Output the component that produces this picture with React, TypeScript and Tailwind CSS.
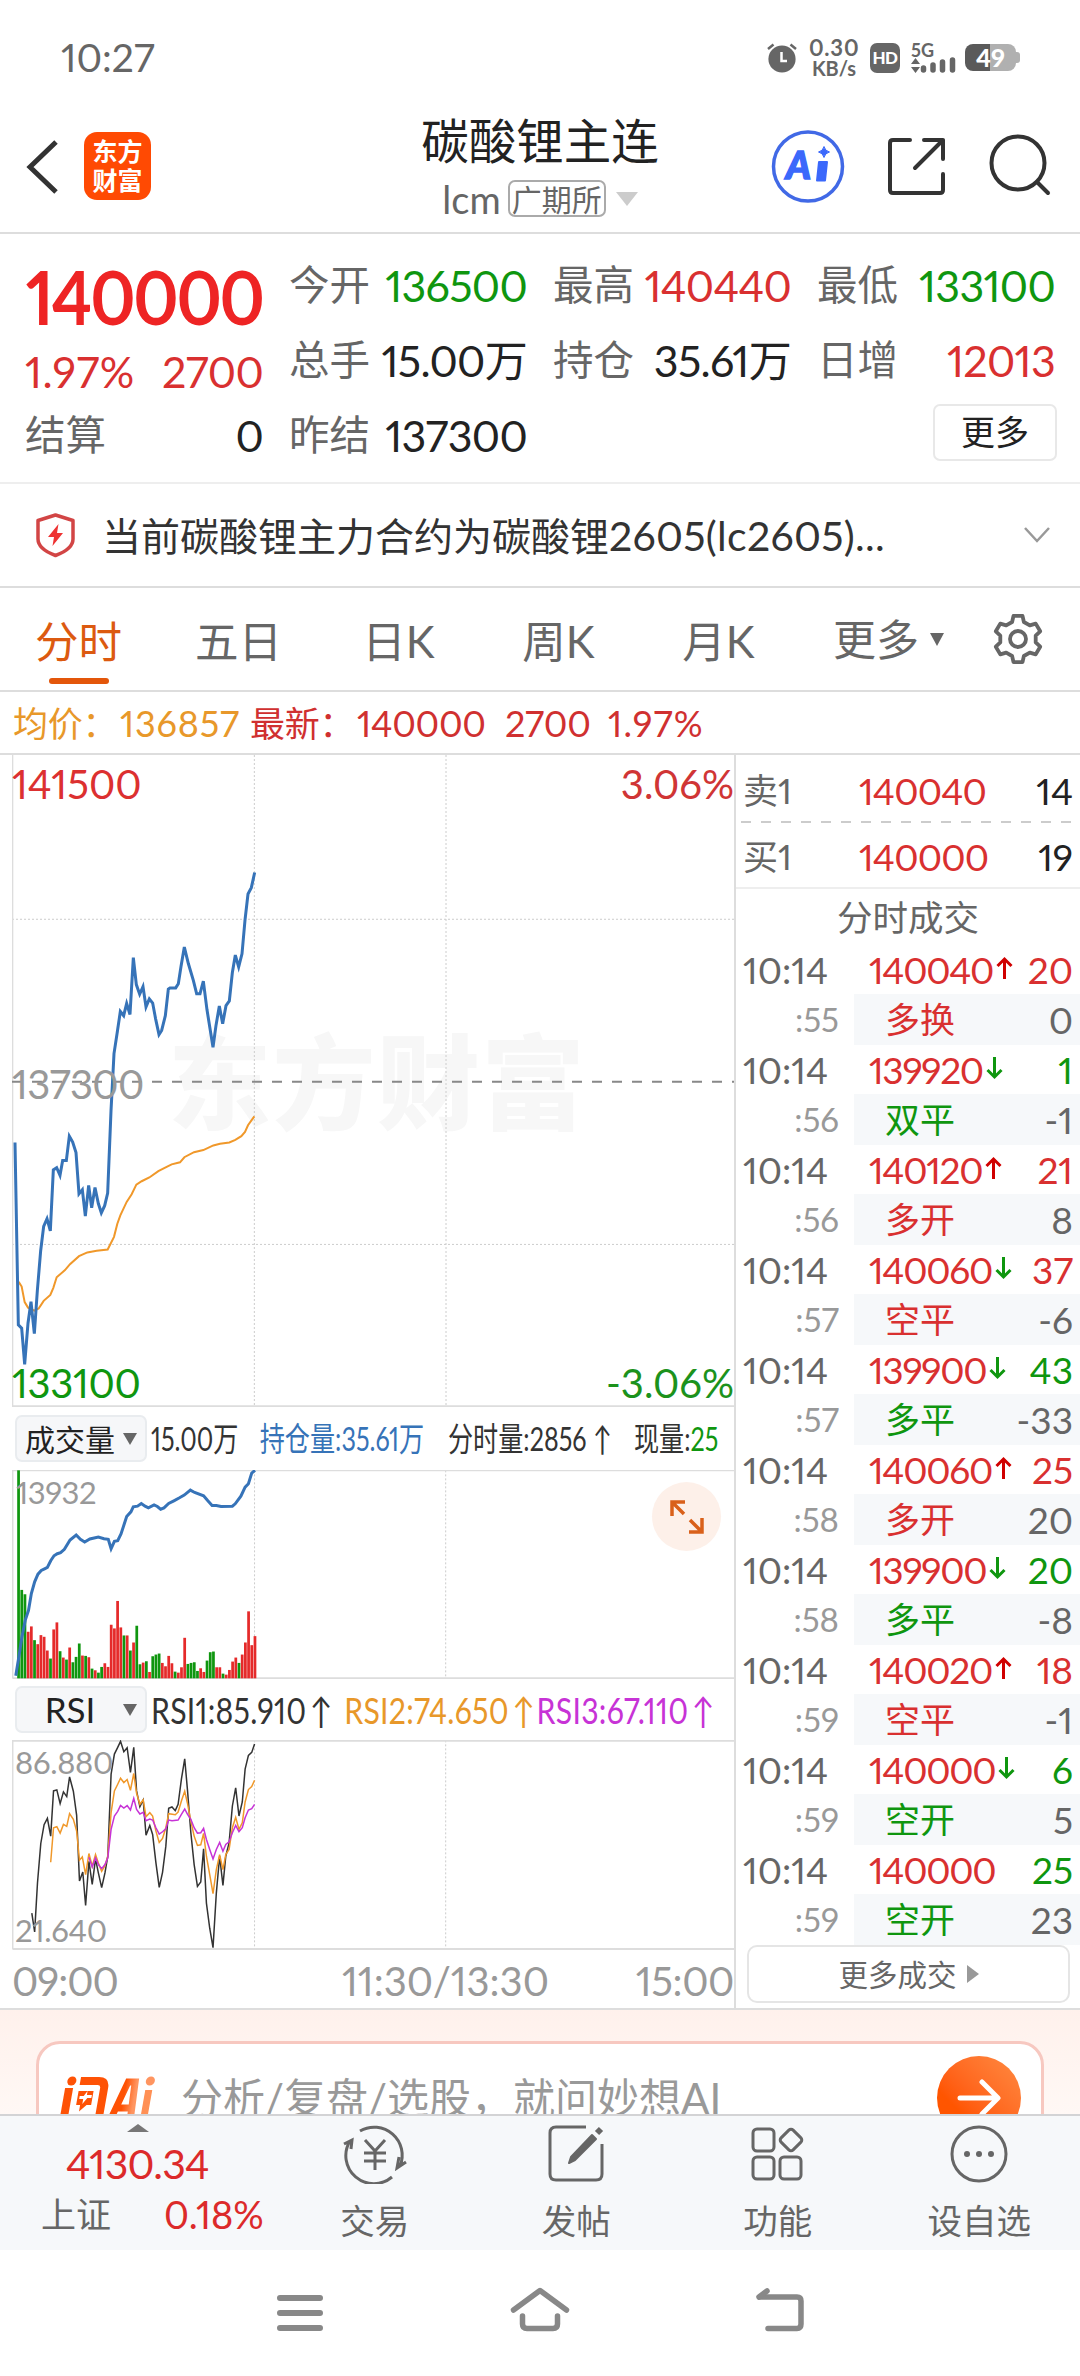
import React, { useState } from 'react';

type Trade = {
  time: string;
  sec: string;
  price: string;
  dir?: 'up' | 'down';
  vol: string;
  volUp: boolean;
  kind: string;
  kindUp: boolean;
  diff: string;
};

const trades: Trade[] = [
  { time: '10:14', sec: ':55', price: '140040', dir: 'up', vol: '20', volUp: true, kind: '多换', kindUp: true, diff: '0' },
  { time: '10:14', sec: ':56', price: '139920', dir: 'down', vol: '1', volUp: false, kind: '双平', kindUp: false, diff: '-1' },
  { time: '10:14', sec: ':56', price: '140120', dir: 'up', vol: '21', volUp: true, kind: '多开', kindUp: true, diff: '8' },
  { time: '10:14', sec: ':57', price: '140060', dir: 'down', vol: '37', volUp: true, kind: '空平', kindUp: true, diff: '-6' },
  { time: '10:14', sec: ':57', price: '139900', dir: 'down', vol: '43', volUp: false, kind: '多平', kindUp: false, diff: '-33' },
  { time: '10:14', sec: ':58', price: '140060', dir: 'up', vol: '25', volUp: true, kind: '多开', kindUp: true, diff: '20' },
  { time: '10:14', sec: ':58', price: '139900', dir: 'down', vol: '20', volUp: false, kind: '多平', kindUp: false, diff: '-8' },
  { time: '10:14', sec: ':59', price: '140020', dir: 'up', vol: '18', volUp: true, kind: '空平', kindUp: true, diff: '-1' },
  { time: '10:14', sec: ':59', price: '140000', dir: 'down', vol: '6', volUp: false, kind: '空开', kindUp: false, diff: '5' },
  { time: '10:14', sec: ':59', price: '140000', vol: '25', volUp: false, kind: '空开', kindUp: false, diff: '23' },
];

const priceLine =
  '45,933 55,1366 65,1374 74,1460 84,1362 93,1311 103,1387 112,1285 122,1190 131,1132 141,1114 151,1143 160,998 170,993 180,1011 188,976 199,976 208,918 218,932 228,957 237,1055 247,1045 256,1108 266,1035 275,1088 285,1040 295,1078 304,1100 314,1083 323,1053 333,858 342,722 352,670 361,622 371,632 380,603 390,629 400,494 409,558 419,581 429,563 438,611 448,592 458,602 467,640 477,677 485,667 496,632 505,569 510,566 527,566 535,556 543,515 553,469 565,508 580,548 590,580 600,580 610,550 621,618 639,707 648,655 658,609 668,651 678,608 688,597 697,530 706,488 716,516 726,485 735,405 744,343 754,328 764,292';
const avgLine =
  '56,1264 65,1275 74,1312 84,1325 103,1332 116,1327 131,1309 151,1295 160,1278 170,1253 195,1236 210,1222 237,1203 262,1194 290,1190 323,1187 342,1157 352,1126 361,1106 380,1074 395,1056 409,1033 425,1025 448,1016 475,1001 500,991 515,985 540,980 553,968 582,956 610,951 640,940 660,936 688,933 706,927 724,918 735,908 744,892 763,871';
const oiLine =
  '33,825 40,765 46,710 53,660 60,630 66,580 73,545 80,522 87,511 94,506 100,502 107,482 114,467 121,461 128,458 136,448 148,420 161,405 170,418 179,426 190,417 208,411 220,416 229,418 235,446 242,424 249,422 256,402 268,350 277,336 282,321 291,319 299,311 307,319 314,324 326,315 333,320 340,328 347,324 357,311 368,303 380,294 390,286 403,271 412,278 431,288 440,303 449,317 458,317 468,320 492,319 498,312 510,289 519,262 526,252 533,220 540,212';

// one entry per minute: colour + top of the bar
const volumes =
  'g212 g569 g582 r694 r678 g719 r731 r704 r709 r750 g774 r687 r666 g752 r771 g777 r741 g785 g769 g729 r765 g766 r770 g804 r809 g816 g799 r788 r799 r673 r684 r602 r681 g705 r705 g750 r726 g676 g791 r786 g782 r814 g767 g762 g759 r787 r797 r766 r788 g813 r816 r800 r712 g790 g787 g785 g811 r803 r814 g780 g755 g753 r800 r800 g819 r822 r808 r783 r771 g787 r762 r726 r633 r734 r707'.split(' ');

const rsi1 =
  '67,670 73,726 79,580 86,462 93,406 100,387 107,440 113,305 120,302 127,343 134,308 141,322 147,263 155,306 162,378 168,574 175,547 181,647 188,515 195,584 202,508 208,550 215,594 222,550 228,500 235,255 242,195 249,175 255,157 262,188 269,176 276,250 283,175 289,305 296,352 303,332 309,437 317,408 323,435 330,520 337,593 344,548 351,470 357,357 364,353 371,364 377,345 384,270 391,209 397,305 404,430 411,525 418,590 425,577 431,478 437,640 444,715 451,773 458,610 465,500 472,587 478,500 485,460 492,350 499,296 506,380 513,338 519,240 526,199 533,190 539,165';
const rsi2 =
  '107,518 113,415 120,412 127,431 134,405 141,411 147,373 155,390 162,425 168,512 174,502 181,555 188,492 195,530 202,495 208,520 215,545 222,528 228,500 235,370 242,305 249,285 255,267 262,280 269,271 276,303 283,253 289,312 296,345 303,332 309,382 317,370 323,380 330,425 337,459 344,447 351,415 357,373 371,376 377,368 384,335 391,306 397,343 404,395 411,440 418,468 425,466 431,432 437,500 444,555 451,612 458,540 465,495 472,540 478,495 485,480 492,415 499,384 506,420 513,400 519,338 526,301 533,292 539,273';
const rsi3 =
  '188,503 195,532 202,505 208,525 215,537 222,525 228,505 235,420 242,380 249,366 255,348 262,356 269,349 276,362 283,327 289,360 296,374 303,369 309,394 317,389 323,392 330,415 337,434 344,427 351,418 357,392 364,394 377,392 384,375 391,359 397,375 404,390 411,415 418,431 425,430 431,417 437,450 444,480 451,508 458,480 465,459 472,485 478,465 485,457 492,430 499,408 506,427 513,415 519,385 526,362 533,358 539,345';

const gearPath = [0, 1, 2, 3, 4, 5]
  .flatMap((i) => {
    const a = -90 + i * 60;
    return [
      [a - 19, 18],
      [a - 11, 23.5],
      [a + 11, 23.5],
      [a + 19, 18],
    ];
  })
  .map(([deg, r], i) => {
    const rad = (deg * Math.PI) / 180;
    return `${i ? 'L' : 'M'}${(26 + r * Math.cos(rad)).toFixed(1)} ${(26 + r * Math.sin(rad)).toFixed(1)}`;
  })
  .join('');

function StatusBar() {
  return (
    <div className="flex h-[116px] items-center justify-between pl-[61px] pr-[60px]">
      <span className="text-[39px] leading-none text-[#666]">10:27</span>
      <div className="flex items-center text-[#5f5f5f]">
        <svg width="30" height="30" viewBox="0 0 30 30">
          <circle cx="15" cy="16" r="13.6" fill="#666" />
          <path d="M1 6 L6.500 1.500 M29 6 L23.500 1.500" stroke="#666" strokeWidth="2.500" />
          <path d="M14.500 9 V18 H20" fill="none" stroke="#fff" strokeWidth="2.500" />
        </svg>
        <div className="ml-[12px] w-[50px] text-center text-[22px] leading-[20px] text-[#666]">
          <div className="font-bold tracking-[0.8px]">0.30</div>
          <div className="text-[20px] font-bold">KB/s</div>
        </div>
        <div className="ml-[11px] flex h-[30px] w-[30px] items-center justify-center rounded-[7px] bg-[#666] text-[17px] font-black leading-none tracking-[-0.5px] text-white">
          HD
        </div>
        <div className="ml-[11px] h-[33px] w-[46px] text-[#666]">
          <div className="h-[16px] text-[18px] font-bold leading-[18px]">5G</div>
          <svg className="block" width="46" height="17" viewBox="0 15 46 17">
            <path d="M4.500 16 L9 22 H0Z M4.500 31 L0 25 H9Z" fill="#666" />
            <path d="M12.500 26V28 M22 23V28 M31.500 20V28 M41.500 18V28" stroke="#666" strokeWidth="5.500" strokeLinecap="round" />
          </svg>
        </div>
        <div className="ml-[8px] flex items-center">
          <div className="flex h-[27px] w-[51px] items-center justify-center rounded-[8px] bg-linear-to-r from-[#5a5a5a] from-50% to-[#b0b0b0] to-50% text-[25px] font-black leading-[27px] text-white">
            49
          </div>
          <div className="h-[11px] w-[4px] rounded-r-[3px] bg-[#b0b0b0]" />
        </div>
      </div>
    </div>
  );
}

function Header() {
  return (
    <div className="flex h-[118px] border-b-2 border-[#ddd]">
      <div className="flex w-[360px] items-start pl-[24px] pt-[16px]">
        <svg className="mt-[7px]" width="36" height="56" viewBox="0 0 36 56">
          <path d="M32 3 L6 28 L32 53" fill="none" stroke="#333" strokeWidth="5" />
        </svg>
        <div className="ml-[24px] flex h-[68px] w-[67px] flex-col items-center justify-center rounded-[13px] bg-[#ff4a03] text-[25px] font-bold leading-[29px] text-white">
          <span>东方</span>
          <span>财富</span>
        </div>
      </div>
      <div className="flex w-[360px] flex-col items-center">
        <div className="mt-[-2px] whitespace-nowrap text-[47.500px] leading-[54px] text-[#222]">碳酸锂主连</div>
        <div className="mt-[11px] flex items-center">
          <span className="text-[38px] leading-[40px] text-[#666]">lcm</span>
          <span className="ml-[7px] flex h-[37px] items-center rounded-[7px] border-2 border-[#aaa] px-[2px] text-[30px] leading-none text-[#666]">
            广期所
          </span>
          <svg className="ml-[10px]" width="22" height="14" viewBox="0 0 22 14">
            <path d="M0 0H22L11 14Z" fill="#ccc" />
          </svg>
        </div>
      </div>
      <div className="flex w-[360px] items-start">
        <svg className="ml-[51px] mt-[13px]" width="74" height="74" viewBox="0 0 74 74">
          <circle cx="37" cy="37.500" r="34.500" fill="none" stroke="#4169e6" strokeWidth="3.500" />
          <text x="15" y="50" fontSize="38" fontWeight="900" fontStyle="italic" fill="#3b68fb" stroke="#3b68fb" strokeWidth="1.5" fontFamily="Lato">
            A
          </text>
          <path d="M48 33H56L54 51.500H46Z" fill="#3b68fb" stroke="#3b68fb" strokeWidth="2" strokeLinejoin="round" />
          <path d="M53 17.500Q54 22 58.500 23Q54 24 53 28.500Q52 24 47.500 23Q52 22 53 17.500Z" fill="#3b68fb" stroke="#3b68fb" />
        </svg>
        <svg className="ml-[41px] mt-[19px]" width="62" height="62" viewBox="0 0 62 62" fill="none" stroke="#333" strokeWidth="4" strokeLinecap="round" strokeLinejoin="round">
          <path d="M24 5H7Q4 5 4 8V55Q4 58 7 58H54Q57 58 57 55V39" />
          <path d="M38 5H57V24 M57 5L29 33" />
        </svg>
        <svg className="ml-[41px] mt-[16px]" width="64" height="64" viewBox="0 0 64 64" fill="none" stroke="#333" strokeWidth="4" strokeLinecap="round">
          <circle cx="29" cy="31" r="26.500" />
          <path d="M48 50L59 61" />
        </svg>
      </div>
    </div>
  );
}

function Field({ label, value, color }: { label: string; value: string; color: string }) {
  return (
    <div className="flex h-[75px] items-center justify-between">
      <span className="text-[40.500px] text-[#666]">{label}</span>
      <span className={`text-[43px] tracking-[-0.7px] ${color}`}>{value}</span>
    </div>
  );
}

function Quote() {
  return (
    <div className="flex h-[250px] border-b-2 border-[#eee] pl-[25px] pr-[25px] pt-[14px] leading-none">
      <div className="w-[238px]">
        <div className="flex h-[98px] items-center justify-center">
          <span className="scale-x-[0.91] text-[75px] font-bold tracking-[-2.5px] text-[#ee2424]">140000</span>
        </div>
        <div className="flex h-[52px] items-center justify-between text-[43px] tracking-[-0.7px] text-[#d93030]">
          <span className="tracking-[0.5px]">1.97%</span>
          <span>2700</span>
        </div>
        <Field label="结算" value="0" color="text-[#222]" />
      </div>
      <div className="ml-[26px] w-[238px]">
        <Field label="今开" value="136500" color="text-[#0f960f]" />
        <Field label="总手" value="15.00万" color="text-[#222]" />
        <Field label="昨结" value="137300" color="text-[#222]" />
      </div>
      <div className="ml-[26px] w-[238px]">
        <Field label="最高" value="140440" color="text-[#d93030]" />
        <Field label="持仓" value="35.61万" color="text-[#222]" />
      </div>
      <div className="ml-[26px] w-[238px]">
        <Field label="最低" value="133100" color="text-[#0f960f]" />
        <Field label="日增" value="12013" color="text-[#d93030]" />
        <div className="flex h-[75px] items-center justify-end">
          <button className="mb-[6px] mr-[-2px] h-[57px] w-[124px] rounded-[7px] border-2 border-[#e8e8e8] text-[34px] text-[#222]">更多</button>
        </div>
      </div>
    </div>
  );
}

function Notice() {
  return (
    <div className="flex h-[105px] items-center border-b-2 border-[#ddd] pl-[34px] pr-[29px]">
      <svg width="43" height="46" viewBox="0 0 43 46" fill="none">
        <path d="M21.500 3L39 8.500V27Q39 37 21.500 43.500Q4 37 4 27V8.500Z" stroke="#d24545" strokeWidth="3.500" strokeLinejoin="round" />
        <path d="M24.500 12L14 25H20L18.500 34L29 21H23Z" fill="#e33" />
      </svg>
      <span className="ml-[25px] flex-1 text-[39px] leading-none text-[#333]">
        当前碳酸锂主力合约为碳酸锂<span className="text-[41px] tracking-[0.3px]">2605(lc2605)...</span>
      </span>
      <svg width="28" height="18" viewBox="0 0 28 18">
        <path d="M2 2L14 15L26 2" fill="none" stroke="#999" strokeWidth="2.500" />
      </svg>
    </div>
  );
}

const tabs = ['分时', '五日', '日K', '周K', '月K'];

function Tabs() {
  const [active, setActive] = useState('分时');

  return (
    <div className="flex h-[104px] items-center border-b-2 border-[#ddd] leading-none">
      {tabs.map((tab) => (
        <button
          key={tab}
          onClick={() => setActive(tab)}
          className={`flex h-full w-[160px] flex-col items-center pr-[3px] pt-[32px] text-[43.500px] ${
            active === tab ? 'text-[#dc5a10]' : 'text-[#666]'
          }`}
        >
          {tab}
          {active === tab && <span className="mt-[14px] h-[6px] w-[60px] rounded-full bg-[#e3560a]" />}
        </button>
      ))}
      <div className="flex items-center pl-[33px] text-[43px] text-[#666]">
        更多
        <svg className="ml-[11px]" width="14" height="13" viewBox="0 0 14 13">
          <path d="M0 0H14L7 13Z" fill="#666" />
        </svg>
      </div>
      <svg className="ml-[48px]" width="52" height="52" viewBox="0 0 52 52" fill="none" stroke="#666" strokeWidth="3.800" strokeLinejoin="round">
        <path d={`${gearPath}Z`} />
        <circle cx="26" cy="26" r="8" />
      </svg>
    </div>
  );
}

function Summary() {
  return (
    <div className="flex h-[63px] items-center border-b-2 border-[#ddd] pl-[13px] pt-[1px] text-[36px] leading-none tracking-[-0.3px]">
      <span className="w-[107px] whitespace-nowrap text-[35px] text-[#e8982a]">均价：</span>
      <span className="w-[130px] tracking-[0.8px] text-[#e8982a]">136857</span>
      <span className="w-[107px] whitespace-nowrap text-[35px] text-[#d03030]">最新：</span>
      <span className="w-[148px] text-[#d03030]">140000</span>
      <span className="w-[103px] text-[#d03030]">2700</span>
      <span className="tracking-[1.2px] text-[#d03030]">1.97%</span>
    </div>
  );
}

function PriceChart() {
  return (
    <div className="relative h-[652px] pl-[12px]">
      <div className="absolute left-[168px] top-[262px] flex text-[103px] font-black leading-[130px] tracking-[1.5px] text-[#f7f7f7]">东方财富</div>
      <svg className="relative block" width="722" height="652" viewBox="36 13 2166 1548" preserveAspectRatio="none" fill="none">
        <g stroke="#ccc" strokeDasharray="2 2">
          <path d="M763 13V1560 M1338 13V1560 M36 403H2202 M36 1175H2202" vectorEffect="non-scaling-stroke" />
        </g>
        <path d="M37 13V1559H2202" stroke="#ddd" strokeWidth="2" vectorEffect="non-scaling-stroke" />
        <path d="M36 789H2202" stroke="#888" strokeWidth="2" strokeDasharray="10 10" vectorEffect="non-scaling-stroke" />
        <polyline points={avgLine} stroke="#f0982a" strokeWidth="2" vectorEffect="non-scaling-stroke" />
        <polyline points={priceLine} stroke="#3673b8" strokeWidth="3" vectorEffect="non-scaling-stroke" />
      </svg>
      <div className="absolute inset-0 text-[40px] leading-none">
        <span className="absolute left-[12px] top-[9px] text-[#dc3030]">141500</span>
        <span className="absolute right-0 top-[9px] text-[#d03535]">3.06%</span>
        <span className="absolute left-[12px] top-[309px] tracking-[-0.7px] text-[#999]">137300</span>
        <span className="absolute bottom-[4px] left-[12px] tracking-[-0.3px] text-[#0f960f]">133100</span>
        <span className="absolute bottom-[4px] right-0 text-[#1c921c]">-3.06%</span>
      </div>
    </div>
  );
}

function Picker({ label, size }: { label: string; size: string }) {
  return (
    <div className="flex h-[47px] w-[132px] shrink-0 items-center rounded-[7px] border-2 border-[#e9ecef] bg-[#f6f7f9] text-[#222]">
      <span className={`flex-1 text-center ${size}`}>{label}</span>
      <svg className="mr-[8px]" width="14" height="12" viewBox="0 0 14 12">
        <path d="M0 0H14L7 12Z" fill="#666" />
      </svg>
    </div>
  );
}

function VolumePanel() {
  return (
    <>
      <div className="flex h-[63px] items-center pl-[15px] leading-none">
        <Picker label="成交量" size="text-[30px]" />
        <div className="ml-[4px] flex w-[760px] origin-left scale-x-[0.75] items-center whitespace-nowrap text-[33.500px] text-[#333]">
          <span className="w-[145px] shrink-0">15.00万</span>
          <span className="w-[251px] shrink-0 text-[#3673b8]">持仓量:35.61万</span>
          <span className="w-[248px] shrink-0">分时量:2856 ↑</span>
          <span>
            现量:<span className="text-[#0f960f]">25</span>
          </span>
        </div>
      </div>
      <div className="relative h-[209px] pl-[12px]">
        <svg className="block" width="722" height="209" viewBox="25 211 1530 624" preserveAspectRatio="none" fill="none">
          <path d="M539 212V833 M944 212V833" stroke="#ccc" strokeDasharray="2 2" vectorEffect="non-scaling-stroke" />
          <path d="M26 833V212H1555 M26 833H1555" stroke="#ddd" strokeWidth="2" vectorEffect="non-scaling-stroke" />
          {volumes.map((v, i) => (
            <rect
              key={i}
              x={36 + i * 6.77}
              y={Number(v.slice(1))}
              width="5.800"
              height={833 - Number(v.slice(1))}
              fill={v[0] === 'g' ? '#0f960f' : '#e52a2a'}
            />
          ))}
          <polyline points={oiLine} stroke="#3673b8" strokeWidth="3" vectorEffect="non-scaling-stroke" />
        </svg>
        <span className="absolute left-[16px] top-[7px] text-[31px] leading-none tracking-[-0.5px] text-[#999]">13932</span>
        <div className="absolute right-[13px] top-[12px] flex h-[69px] w-[69px] items-center justify-center rounded-full bg-[#fdf0e9]">
          <svg width="34" height="34" viewBox="0 0 34 34" fill="none" stroke="#d9601a" strokeWidth="3.500">
            <path d="M2 16V2H15 M2 2L14 14" />
            <path d="M32 18V32H19 M32 32L20 20" />
          </svg>
        </div>
      </div>
    </>
  );
}

function RsiPanel() {
  return (
    <>
      <div className="flex h-[61px] items-center pl-[15px] leading-none">
        <Picker label="RSI" size="text-[35px]" />
        <div className="ml-[4px] flex w-[700px] origin-left scale-x-[0.84] items-center whitespace-nowrap text-[36px] tracking-[0.3px]">
          <span className="w-[230px] shrink-0 text-[#333]">
            RSI1:85.910<span className="ml-[4px]">↑</span>
          </span>
          <span className="w-[229px] shrink-0 text-[#e8982a]">
            RSI2:74.650<span className="ml-[4px]">↑</span>
          </span>
          <span className="text-[#c733d6]">
            RSI3:67.110<span className="ml-[4px]">↑</span>
          </span>
        </div>
      </div>
      <div className="relative h-[210px] pl-[12px]">
        <svg className="block" width="722" height="210" viewBox="25 153 1530 627" preserveAspectRatio="none" fill="none">
          <path d="M539 154V777 M944 154V777" stroke="#ccc" strokeDasharray="2 2" vectorEffect="non-scaling-stroke" />
          <path d="M26 777V155H1555 M26 777H1555" stroke="#ddd" strokeWidth="2" vectorEffect="non-scaling-stroke" />
          <polyline points={rsi1} stroke="#333" strokeWidth="1.500" vectorEffect="non-scaling-stroke" />
          <polyline points={rsi2} stroke="#f0982a" strokeWidth="1.500" vectorEffect="non-scaling-stroke" />
          <polyline points={rsi3} stroke="#c733d6" strokeWidth="1.500" vectorEffect="non-scaling-stroke" />
        </svg>
        <div className="absolute inset-0 text-[31px] leading-none tracking-[-0.3px] text-[#999]">
          <span className="absolute left-[15px] top-[7px]">86.880</span>
          <span className="absolute bottom-[4px] left-[15px]">21.640</span>
        </div>
      </div>
      <div className="relative flex h-[59px] items-center justify-between pl-[12px] pt-[2px] text-[40px] leading-none text-[#999]">
        <span className="tracking-[-1px]">09:00</span>
        <span className="absolute left-[342px]">11:30/13:30</span>
        <span className="tracking-[-0.4px]">15:00</span>
      </div>
    </>
  );
}

function Arrow({ dir }: { dir?: 'up' | 'down' }) {
  if (!dir) return null;
  return (
    <svg className="mb-[3px] ml-[3px]" width="17" height="24" viewBox="0 0 17 24" fill="none" strokeWidth="3">
      {dir === 'up' ? (
        <path d="M8.500 23V3 M1.500 10L8.500 3L15.500 10" stroke="#d00000" />
      ) : (
        <path d="M8.500 1V21 M1.500 14L8.500 21L15.500 14" stroke="#0f960f" />
      )}
    </svg>
  );
}

function OrderBook() {
  return (
    <div className="w-[346px] border-l-2 border-[#ddd] leading-none">
      {/* Best ask / bid */}
      <div className="flex h-[66px] items-center pl-[7px] pr-[7px] pt-[4px] text-[37px]">
        <span className="w-[116px] text-[35px] text-[#666]">卖1</span>
        <span className="flex-1 tracking-[-0.8px] text-[#d93030]">140040</span>
        <span className="text-[#222]">14</span>
      </div>
      <svg className="block" width="344" height="2" viewBox="0 0 344 2">
        <path d="M5 1H336" stroke="#ccc" strokeWidth="2" strokeDasharray="10 10" />
      </svg>
      <div className="flex h-[66px] items-center border-b-2 border-[#eee] pl-[7px] pr-[7px] pt-[2px] text-[37px]">
        <span className="w-[116px] text-[35px] text-[#666]">买1</span>
        <span className="flex-1 tracking-[-0.8px] text-[#d93030]">140000</span>
        <span className="text-[#222]">19</span>
      </div>

      <div className="flex h-[56px] items-center justify-center text-[35.500px] text-[#666]">分时成交</div>

      {/* Trades */}
      {trades.map((t, i) => (
        <div key={i}>
          <div className="flex h-[49px] items-center pl-[7px] pr-[7px] text-[37px]">
            <span className="w-[126px] text-[#666]">{t.time}</span>
            <span className="flex flex-1 items-center tracking-[-1.3px] text-[#d93030]">
              {t.price}
              <Arrow dir={t.dir} />
            </span>
            <span className={t.volUp ? 'text-[#d93030]' : 'text-[#0f960f]'}>{t.vol}</span>
          </div>
          <div className="flex h-[51px] items-center text-[33px]">
            <span className="w-[118px] pr-[15px] text-right text-[#999]">{t.sec}</span>
            <div className="flex h-full flex-1 items-center justify-between bg-[#f6f8fa] pl-[31px] pr-[7px] text-[35px]">
              <span className={t.kindUp ? 'text-[#d93030]' : 'text-[#0f960f]'}>{t.kind}</span>
              <span className="text-[37px] text-[#666]">{t.diff}</span>
            </div>
          </div>
        </div>
      ))}

      <div className="ml-[11px] flex h-[58px] w-[323px] items-center justify-center rounded-[10px] border-2 border-[#e5e5e5] text-[29.500px] text-[#666]">
        更多成交
        <svg className="ml-[10px]" width="12" height="18" viewBox="0 0 12 18">
          <path d="M0 0V18L12 9Z" fill="#999" />
        </svg>
      </div>
    </div>
  );
}

function AskAi() {
  return (
    <div className="h-[104px] overflow-hidden bg-gradient-to-b from-[#fff1ec] to-[#fff8f5] px-[36px] pt-[31px]">
      <div className="flex h-[114px] items-center rounded-[24px] border-[3px] border-[#f7c8c0] bg-white pl-[20px] pr-[20px]">
        <svg width="100" height="64" viewBox="0 0 100 64">
          <defs>
            <linearGradient id="ask" x1="0" x2="1">
              <stop offset="0.5" stopColor="#fe5205" />
              <stop offset="1" stopColor="#ff9560" />
            </linearGradient>
          </defs>
          <g transform="skewX(-10) translate(8 0)" stroke="url(#ask)" fill="none" strokeWidth="8">
            <circle cx="7.500" cy="15" r="4.500" fill="#fe5205" stroke="none" />
            <path d="M6 22V60" stroke="#fe5205" />
            <path d="M16 15H34Q41 15 41 22V60" stroke="#fe5205" />
            <path d="M17 26H30V38H26L21 43V38H17Z" stroke="#fe5205" fill="#fe5205" strokeWidth="2" />
            <path d="M25 25V29H30V32H26L22 38V33H18V30H22Z" fill="#fff" stroke="none" />
            <path d="M51 60L64 16H71L73 60 M58 42H72" strokeWidth="7" />
            <path d="M86 24V60" stroke="#ff9055" strokeWidth="7" />
            <circle cx="86" cy="15" r="4.500" fill="#ff9560" stroke="none" />
          </g>
        </svg>
        <span className="ml-[22px] flex-1 whitespace-nowrap text-[42px] leading-none text-[#999]">分析/复盘/选股，就问妙想AI</span>
        <div className="flex h-[84px] w-[84px] items-center justify-center rounded-full bg-gradient-to-bl from-[#ff8a40] to-[#ff5500] to-70%">
          <svg width="44" height="40" viewBox="0 0 44 40" fill="none" stroke="#fff" strokeWidth="5" strokeLinecap="round" strokeLinejoin="round">
            <path d="M3 20H40 M25 4L41 20L25 36" />
          </svg>
        </div>
      </div>
    </div>
  );
}

function BottomBar() {
  const icon = { width: 64, height: 60, viewBox: '0 0 64 60', fill: 'none', stroke: '#666', strokeWidth: 3 };
  return (
    <div className="flex h-[136px] border-t-2 border-[#d3d3d5] bg-[#f6f8fa] leading-none">
      <div className="w-[274px]">
        <svg className="ml-[127px] mt-[8px] block" width="22" height="8" viewBox="0 0 22 8">
          <path d="M0 8H22L11 0Z" fill="#777" />
        </svg>
        <div className="mt-[8px] flex h-[46px] items-center pl-[66px] text-[41px] tracking-[-0.8px] text-[#dc2a2a]">4130.34</div>
        <div className="mt-[5px] flex h-[46px] items-center text-[#666]">
          <span className="w-[164px] pl-[41px] text-[35px]">上证</span>
          <span className="text-[38px] text-[#dc2a2a]">0.18%</span>
        </div>
      </div>
      <div className="grid flex-1 grid-cols-4 pt-[8px] text-[34.500px] text-[#666]">
        <div className="flex flex-col items-center gap-[20px]">
          <svg {...icon}>
            <path d="M17 7A28 28 0 0 1 57 42 M56 33L54 44L63 38" />
            <path d="M49 53A28 28 0 0 1 7 17 M1 20L9 16L8 25" />
            <path d="M22 16L32 27L42 16 M21 29H43 M21 37H43 M32 27V46" />
          </svg>
          <span>交易</span>
        </div>
        <div className="flex flex-col items-center gap-[20px]">
          <svg {...icon}>
            <path d="M42 3H12Q6 3 6 9V50Q6 56 12 56H52Q58 56 58 50V20" />
            <path d="M25 39L27 33L48 11L52 15L31 36Z" fill="#666" strokeWidth="2" strokeLinejoin="round" />
            <path d="M53 9L57 5" strokeWidth="6" />
          </svg>
          <span>发帖</span>
        </div>
        <div className="flex flex-col items-center gap-[20px]">
          <svg {...icon}>
            <rect x="7" y="5" width="21" height="22" rx="4" />
            <rect x="7" y="33" width="21" height="22" rx="4" />
            <rect x="34" y="33" width="21" height="22" rx="4" />
            <rect x="36.500" y="7.500" width="17" height="17" rx="3" transform="rotate(45 45 16)" />
          </svg>
          <span>功能</span>
        </div>
        <div className="flex flex-col items-center gap-[20px]">
          <svg {...icon}>
            <circle cx="32" cy="30" r="27" />
            <g fill="#666" stroke="none">
              <circle cx="20" cy="30" r="3" />
              <circle cx="32" cy="30" r="3" />
              <circle cx="44" cy="30" r="3" />
            </g>
          </svg>
          <span>设自选</span>
        </div>
      </div>
    </div>
  );
}

function SystemNav() {
  return (
    <div className="flex h-[126px] items-start justify-between px-[270px] pt-[34px]">
      <svg width="60" height="54" viewBox="0 0 60 54" stroke="#888" strokeWidth="6" strokeLinecap="round">
        <path d="M10 14H50 M10 29H50 M10 44H50" />
      </svg>
      <svg width="60" height="54" viewBox="0 0 60 54" fill="none" stroke="#888" strokeWidth="5.500" strokeLinecap="round" strokeLinejoin="round">
        <path d="M3.500 26L30 6.500L56.500 26" />
        <path d="M12.500 32V40Q12.500 44.500 17 44.500H43Q47.500 44.500 47.500 40V32" />
      </svg>
      <svg width="60" height="54" viewBox="0 0 60 54" fill="none" stroke="#888" strokeWidth="5.500" strokeLinecap="round" strokeLinejoin="round">
        <path d="M10 13H47Q51 13 51 17V40Q51 44.500 47 44.500H18" />
        <path d="M9 13L17 7" />
      </svg>
    </div>
  );
}

export default function App() {
  return (
    <div className="flex h-[2376px] w-[1080px] flex-col overflow-hidden bg-white font-[Lato,'Noto_Sans_CJK_SC',sans-serif] proportional-nums">
      <StatusBar />
      <Header />
      <Quote />
      <Notice />
      <Tabs />
      <Summary />
      <div className="flex h-[1255px] border-b-2 border-[#ddd]">
        <div className="w-[734px]">
          <PriceChart />
          <VolumePanel />
          <RsiPanel />
        </div>
        <OrderBook />
      </div>
      <AskAi />
      <BottomBar />
      <SystemNav />
    </div>
  );
}
